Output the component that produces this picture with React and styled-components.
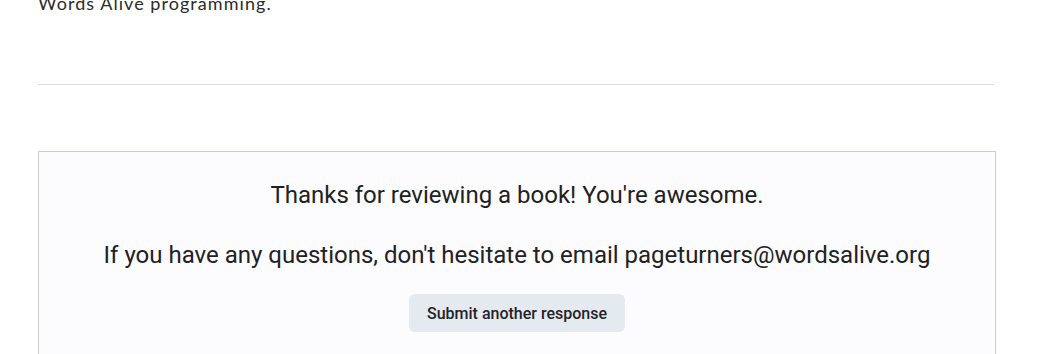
import React from "react";
import styled, { createGlobalStyle } from "styled-components";

const Global = createGlobalStyle`
  html, body { margin: 0; padding: 0; background: #fff; }
  body { overflow: hidden; }
`;

const Page = styled.div`
  width: 958px;
  margin-left: 38px;
`;

const Intro = styled.p`
  margin: -9px 0 0;
  font-family: "Lato", "Liberation Sans", sans-serif;
  font-size: 18px;
  line-height: 24px;
  color: #2b2b2b;
  letter-spacing: 1.05px;
`;

const Divider = styled.hr`
  margin: 69px 0 0;
  width: 956px;
  border: 0;
  border-top: 1px solid #dcdcdc;
  height: 0;
`;

const Card = styled.section`
  margin-top: 66px;
  box-sizing: border-box;
  width: 958px;
  height: 240px;
  border: 1px solid #cccccc;
  background: #fcfcfe;
  display: flex;
  flex-direction: column;
  align-items: center;
  padding-top: 28px;
`;

const Message = styled.p`
  margin: 0 0 ${(p) => p.$gap || 0}px;
  font-family: "Roboto", "Liberation Sans", sans-serif;
  font-size: 24px;
  line-height: 30px;
  color: #202124;
  text-align: center;
`;

const Button = styled.button`
  margin-top: 24px;
  border: 0;
  border-radius: 6px;
  background: #e5e9f0;
  color: #1f2328;
  font-family: "Roboto", "Liberation Sans", sans-serif;
  font-weight: 500;
  font-size: 16px;
  height: 38px;
  padding: 0 18px;
  cursor: pointer;
`;

export default function App() {
  return (
    <>
      <Global />
      <Page>
        <Intro>Words Alive programming.</Intro>
        <Divider />
        <Card>
          <Message $gap={30}>Thanks for reviewing a book! You're awesome.</Message>
          <Message>If you have any questions, don't hesitate to email pageturners@wordsalive.org</Message>
          <Button>Submit another response</Button>
        </Card>
      </Page>
    </>
  );
}
